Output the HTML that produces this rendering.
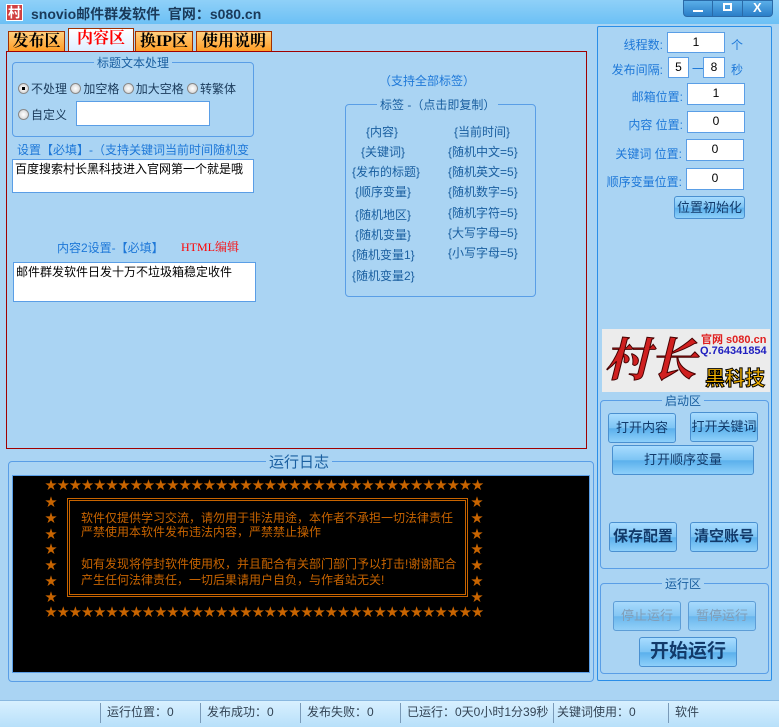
<!DOCTYPE html>
<html><head><meta charset="utf-8">
<style>
*{margin:0;padding:0;box-sizing:border-box}
body{width:779px;height:727px;overflow:hidden;background:#aad4f3;font-family:"Liberation Sans","Noto Sans CJK SC","WenQuanYi Zen Hei",sans-serif;font-size:12px;position:relative}
.a{position:absolute;white-space:nowrap}
.title{left:0;top:0;width:779px;height:24px;background:linear-gradient(#8fd0f8,#6cc0f5)}
.grp{position:absolute;border:1px solid #5a9ee6;border-radius:4px}
.gt{position:absolute;background:#aad4f3;padding:0 3px;color:#1a5fa0;font-size:12px;white-space:nowrap}
.in{position:absolute;background:#fff;border:1px solid #5a9ee6;text-align:center;font-size:12px;line-height:18px;white-space:nowrap;overflow:hidden}
.btn{position:absolute;border:1px solid #4a90d0;border-radius:3px;background:linear-gradient(#a8dcff 0%,#7cc4f4 50%,#5ab0ec 52%,#8ed0fa 100%);color:#123a6a;text-align:center;font-size:13px}
.tab{position:absolute;top:31px;height:21px;border:1px solid #a03000;border-bottom:none;background:linear-gradient(#ffd080,#ff9a20);font-weight:bold;font-size:16px;line-height:20px;text-align:center;color:#000;font-family:"Liberation Serif","Noto Serif CJK SC",serif}
.rl{position:absolute;color:#1e78d8;font-size:12px;white-space:nowrap;text-align:right}
.tg{position:absolute;color:#1a5fa0;font-size:12px;white-space:nowrap}
.radio{display:inline-block;width:11px;height:11px;border:1px solid #888;border-radius:50%;background:radial-gradient(#fff,#ccc);vertical-align:-1px;margin-right:2px;position:relative}
.sb{position:absolute;top:703px;color:#345;font-size:12px}
.sep{position:absolute;top:703px;width:1px;height:20px;background:#7a9ab8}
.srow{position:absolute;left:45px;width:439px;display:flex;justify-content:space-between;color:#c86400;font-size:12px;line-height:12px}
.st{position:absolute;color:#c86400;font-size:12px;line-height:12px}
.lt{position:absolute;left:81px;color:#c86400;font-size:12px;line-height:14px;white-space:nowrap}
</style></head><body>
<div class="a title"></div>
<div class="a" style="left:6px;top:4px;width:17px;height:17px;background:#d04040;border:1px solid #fff;color:#fff;font-weight:bold;font-size:13px;line-height:15px;text-align:center">村</div>
<div class="a" style="left:31px;top:4px;font-weight:bold;font-size:14px;color:#1a3a5a">snovio邮件群发软件&nbsp;&nbsp;官网：s080.cn</div>
<div class="a" style="left:683px;top:0;width:90px;height:17px;background:linear-gradient(#5aaee8,#2a7ec8);border-radius:0 0 4px 4px;border:1px solid #2a6aa8"></div>
<div class="a" style="left:712px;top:0;width:1px;height:17px;background:#2a6aa8"></div>
<div class="a" style="left:742px;top:0;width:1px;height:17px;background:#2a6aa8"></div>
<div class="a" style="left:693px;top:10px;width:10px;height:2px;background:#fff"></div>
<div class="a" style="left:723px;top:3px;width:9px;height:8px;border:2px solid #fff"></div>
<div class="a" style="left:753px;top:0px;color:#fff;font-weight:bold;font-size:13px">X</div>

<div class="tab" style="left:8px;width:57px">发布区</div>
<div class="tab" style="left:68px;top:28px;height:24px;width:66px;background:linear-gradient(#fff,#ddeeff);color:#f00;border-color:#a03000">内容区</div>
<div class="tab" style="left:135px;width:58px">换IP区</div>
<div class="tab" style="left:196px;width:76px">使用说明</div>
<div class="a" style="left:6px;top:51px;width:581px;height:398px;border:1px solid #a00000"></div>

<div class="grp" style="left:12px;top:62px;width:242px;height:75px"></div>
<div class="gt" style="left:94px;top:54px">标题文本处理</div>
<div class="a" style="left:18px;top:80px;color:#1a3a5a"><span class="radio"><span style="position:absolute;left:3px;top:3px;width:3px;height:3px;background:#000"></span></span>不处理 <span class="radio"></span>加空格 <span class="radio"></span>加大空格 <span class="radio"></span>转繁体</div>
<div class="a" style="left:18px;top:106px;color:#1a3a5a"><span class="radio"></span>自定义</div>
<div class="in" style="left:76px;top:101px;width:134px;height:25px"></div>
<div class="a" style="left:17px;top:141px;color:#1e78d8">设置【必填】-（支持关键词当前时间随机变</div>
<div class="in" style="left:12px;top:159px;width:242px;height:34px;text-align:left;padding-left:2px;color:#000">百度搜索村长黑科技进入官网第一个就是哦</div>
<div class="a" style="left:57px;top:239px;color:#1e78d8">内容2设置-【必填】</div>
<div class="a" style="left:181px;top:238px;color:#f00;font-family:'Liberation Serif','Noto Serif CJK SC',serif">HTML编辑</div>
<div class="in" style="left:13px;top:262px;width:243px;height:40px;text-align:left;padding-left:2px;color:#000">邮件群发软件日发十万不垃圾箱稳定收件</div>

<div class="a" style="left:379px;top:72px;color:#1e78d8">（支持全部标签）</div>
<div class="grp" style="left:345px;top:104px;width:191px;height:193px"></div>
<div class="gt" style="left:377px;top:96px">标签 -（点击即复制）</div>
<div class="tg" style="left:366px;top:123px">{内容}</div>
<div class="tg" style="left:361px;top:143px">{关键词}</div>
<div class="tg" style="left:352px;top:163px">{发布的标题}</div>
<div class="tg" style="left:355px;top:183px">{顺序变量}</div>
<div class="tg" style="left:355px;top:206px">{随机地区}</div>
<div class="tg" style="left:355px;top:226px">{随机变量}</div>
<div class="tg" style="left:352px;top:246px">{随机变量1}</div>
<div class="tg" style="left:352px;top:267px">{随机变量2}</div>
<div class="tg" style="left:454px;top:123px">{当前时间}</div>
<div class="tg" style="left:448px;top:143px">{随机中文=5}</div>
<div class="tg" style="left:448px;top:163px">{随机英文=5}</div>
<div class="tg" style="left:448px;top:183px">{随机数字=5}</div>
<div class="tg" style="left:448px;top:204px">{随机字符=5}</div>
<div class="tg" style="left:448px;top:224px">{大写字母=5}</div>
<div class="tg" style="left:448px;top:244px">{小写字母=5}</div>

<div class="grp" style="left:8px;top:461px;width:586px;height:221px"></div>
<div class="gt" style="left:266px;top:451px;font-size:15px">运行日志</div>
<div class="a" style="left:12px;top:475px;width:578px;height:198px;background:#000;border:1px solid #5a9ee6"></div>
<div class="srow" style="top:479px"><span>★</span><span>★</span><span>★</span><span>★</span><span>★</span><span>★</span><span>★</span><span>★</span><span>★</span><span>★</span><span>★</span><span>★</span><span>★</span><span>★</span><span>★</span><span>★</span><span>★</span><span>★</span><span>★</span><span>★</span><span>★</span><span>★</span><span>★</span><span>★</span><span>★</span><span>★</span><span>★</span><span>★</span><span>★</span><span>★</span><span>★</span><span>★</span><span>★</span><span>★</span><span>★</span><span>★</span></div>
<div class="srow" style="top:606px"><span>★</span><span>★</span><span>★</span><span>★</span><span>★</span><span>★</span><span>★</span><span>★</span><span>★</span><span>★</span><span>★</span><span>★</span><span>★</span><span>★</span><span>★</span><span>★</span><span>★</span><span>★</span><span>★</span><span>★</span><span>★</span><span>★</span><span>★</span><span>★</span><span>★</span><span>★</span><span>★</span><span>★</span><span>★</span><span>★</span><span>★</span><span>★</span><span>★</span><span>★</span><span>★</span><span>★</span></div>
<div class="st" style="left:45px;top:495px;line-height:15.8px">★<br>★<br>★<br>★<br>★<br>★<br>★</div>
<div class="st" style="left:471px;top:495px;line-height:15.8px">★<br>★<br>★<br>★<br>★<br>★<br>★</div>
<div class="a" style="left:67px;top:498px;width:401px;height:99px;border:3px double #c86400"></div>
<div class="a" style="left:71px;top:502px;width:393px;height:91px;border:1px solid #000"></div>
<div class="lt" style="top:511px">软件仅提供学习交流，请勿用于非法用途，本作者不承担一切法律责任</div>
<div class="lt" style="top:525px">严禁使用本软件发布违法内容，严禁禁止操作</div>
<div class="lt" style="top:557px">如有发现将停封软件使用权，并且配合有关部门部门予以打击!谢谢配合</div>
<div class="lt" style="top:573px">产生任何法律责任，一切后果请用户自负，与作者站无关!</div>

<div class="a" style="left:597px;top:26px;width:175px;height:655px;border:1px solid #2a8ee8;border-radius:2px"></div>
<div class="rl" style="left:610px;top:36px;width:53px">线程数:</div>
<div class="in" style="left:667px;top:32px;width:58px;height:21px">1</div>
<div class="a" style="left:731px;top:36px;color:#1e78d8">个</div>
<div class="rl" style="left:600px;top:61px;width:63px">发布间隔:</div>
<div class="in" style="left:668px;top:57px;width:21px;height:21px">5</div>
<div class="a" style="left:692px;top:60px;color:#1e78d8">一</div>
<div class="in" style="left:703px;top:57px;width:22px;height:21px">8</div>
<div class="a" style="left:731px;top:61px;color:#1e78d8">秒</div>
<div class="rl" style="left:610px;top:88px;width:73px">邮箱位置:</div>
<div class="in" style="left:687px;top:83px;width:58px;height:22px">1</div>
<div class="rl" style="left:610px;top:116px;width:73px">内容 位置:</div>
<div class="in" style="left:687px;top:111px;width:58px;height:22px">0</div>
<div class="rl" style="left:600px;top:145px;width:82px">关键词 位置:</div>
<div class="in" style="left:686px;top:139px;width:58px;height:22px">0</div>
<div class="rl" style="left:600px;top:173px;width:82px">顺序变量位置:</div>
<div class="in" style="left:686px;top:168px;width:58px;height:22px">0</div>
<div class="btn" style="left:674px;top:196px;width:71px;height:23px;line-height:21px">位置初始化</div>

<div class="a" style="left:602px;top:329px;width:168px;height:63px;background:#ececec"></div>
<div class="a" style="left:604px;top:324px;font-size:46px;font-weight:bold;color:#d02020;font-style:italic;font-family:'Noto Serif CJK SC',serif;-webkit-text-stroke:1px #400">村长</div>
<div class="a" style="left:701px;top:331px;font-size:11px;font-weight:bold;color:#e02020">官网 s080.cn</div>
<div class="a" style="left:700px;top:345px;font-size:11px;font-weight:bold;color:#2020c0">Q.764341854</div>
<div class="a" style="left:705px;top:362px;font-size:20px;font-weight:bold;color:#f0b000;-webkit-text-stroke:1px #000">黑科技</div>

<div class="grp" style="left:600px;top:400px;width:169px;height:169px"></div>
<div class="gt" style="left:662px;top:392px">启动区</div>
<div class="btn" style="left:608px;top:413px;width:68px;height:30px;line-height:28px">打开内容</div>
<div class="btn" style="left:690px;top:412px;width:68px;height:30px;line-height:28px">打开关键词</div>
<div class="btn" style="left:612px;top:445px;width:142px;height:30px;line-height:28px">打开顺序变量</div>
<div class="btn" style="left:609px;top:522px;width:68px;height:30px;line-height:28px;font-weight:bold;font-size:15px">保存配置</div>
<div class="btn" style="left:690px;top:522px;width:68px;height:30px;line-height:28px;font-weight:bold;font-size:15px">清空账号</div>

<div class="grp" style="left:600px;top:583px;width:169px;height:91px"></div>
<div class="gt" style="left:662px;top:575px">运行区</div>
<div class="btn" style="left:613px;top:601px;width:68px;height:30px;line-height:28px;color:#7890a8;opacity:.8">停止运行</div>
<div class="btn" style="left:688px;top:601px;width:68px;height:30px;line-height:28px;color:#7890a8;opacity:.8">暂停运行</div>
<div class="btn" style="left:639px;top:637px;width:98px;height:30px;line-height:28px;font-weight:bold;font-size:19px">开始运行</div>

<div class="a" style="left:0;top:700px;width:779px;height:27px;background:linear-gradient(#d8f0ff,#b8e0fa);border-top:1px solid #8ab8e0"></div>
<div class="sep" style="left:100px"></div><div class="sep" style="left:200px"></div><div class="sep" style="left:300px"></div><div class="sep" style="left:400px"></div><div class="sep" style="left:553px"></div><div class="sep" style="left:668px"></div>
<div class="sb" style="left:107px">运行位置：0</div>
<div class="sb" style="left:207px">发布成功：0</div>
<div class="sb" style="left:307px">发布失败：0</div>
<div class="sb" style="left:407px">已运行：0天0小时1分39秒</div>
<div class="sb" style="left:557px">关键词使用：0</div>
<div class="sb" style="left:675px">软件</div>
</body></html>
